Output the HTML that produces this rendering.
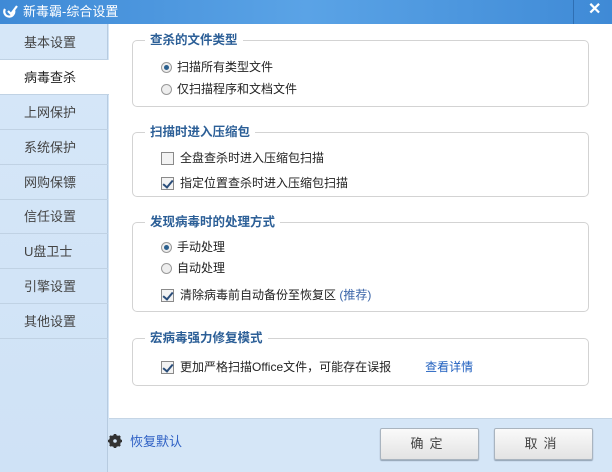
<!DOCTYPE html>
<html><head><meta charset="utf-8"><style>
*{margin:0;padding:0;box-sizing:border-box}
body{width:612px;height:472px;overflow:hidden;font-family:"Liberation Sans","Noto Sans CJK SC",sans-serif;font-size:12px;color:#222;background:#d5e6f7;position:relative}
.title{position:absolute;left:0;top:0;width:612px;height:24px;background:linear-gradient(90deg,#3f8ad6,#5aa3e6 50%,#3f8ad6);color:#fff;font-size:13px;line-height:24px}
.title .t{position:absolute;left:23px;top:0}
.side{position:absolute;left:0;top:24px;width:108px;height:448px;background:linear-gradient(#d6e7f8,#cfe2f6);border-right:1px solid #b7cbe0}
.it{position:absolute;left:0;width:108px;height:35px;line-height:35px;padding-left:24px;color:#444;font-size:13px;border-bottom:1px solid #c0d2e4}
.it.a{background:#fff;color:#222;border-bottom:1px solid #c0d2e4;width:109px}
.main{position:absolute;left:109px;top:24px;width:503px;height:395px;background:#fff;border-bottom:1px solid #c5d5e5}
.box{position:absolute;left:23px;width:457px;border:1px solid #d3d3d3;border-radius:5px}
.lg{position:absolute;left:12px;top:-9px;background:#fff;padding:0 5px;color:#2c5f97;font-size:12.5px;font-weight:bold;line-height:16px}
.row{position:absolute;left:28px;height:16px;line-height:16px;display:flex;align-items:center}
.rad{width:11px;height:11px;border-radius:50%;border:1px solid #999;background:#eee;margin-right:5px;position:relative}
.rad.on::after{content:"";position:absolute;left:2px;top:2px;width:5px;height:5px;border-radius:50%;background:#2a5f8e}
.cb{width:13px;height:13px;border:1px solid #8a8a8a;background:#f3f3f3;margin-right:6px;position:relative}
.cb.on::after{content:"";position:absolute;left:3px;top:0px;width:4px;height:8px;border:solid #2b4e7a;border-width:0 2px 2px 0;transform:rotate(40deg)}
.btn{position:absolute;top:428px;width:99px;height:32px;border:1px solid #a9b4bf;border-radius:2px;background:linear-gradient(#fafafa,#e3e3e3);text-align:center;line-height:30px;font-size:13px;color:#444;letter-spacing:6px;box-shadow:0 1px 1px #8fa0b2}
</style></head><body>
<div class="title"><svg style="position:absolute;left:3px;top:5px" width="16" height="14" viewBox="0 0 16 14"><path d="M2 4 A5 5 0 1 0 11 5" fill="none" stroke="#fff" stroke-width="2.2"/><path d="M5 6 L8 9 L14 1" fill="none" stroke="#fff" stroke-width="2.2"/></svg><span class="t">新毒霸-综合设置</span>
<div style="position:absolute;left:573px;top:0;width:1px;height:24px;background:#2f6fb3"></div>
<span style="position:absolute;left:588px;top:-2px;font-size:16px;font-weight:bold">✕</span></div>
<div class="side">
<div class="it" style="top:1px">基本设置</div>
<div class="it a" style="top:36px">病毒查杀</div>
<div class="it" style="top:71px">上网保护</div>
<div class="it" style="top:106px">系统保护</div>
<div class="it" style="top:141px">网购保镖</div>
<div class="it" style="top:175px">信任设置</div>
<div class="it" style="top:210px">U盘卫士</div>
<div class="it" style="top:245px">引擎设置</div>
<div class="it" style="top:280px">其他设置</div>
</div>
<div class="main">
<div class="box" style="top:16px;height:67px"><div class="lg">查杀的文件类型</div>
<div class="row" style="top:18px;left:28px"><span class="rad on"></span>扫描所有类型文件</div>
<div class="row" style="top:40px;left:28px"><span class="rad"></span>仅扫描程序和文档文件</div></div>
<div class="box" style="top:108px;height:65px"><div class="lg">扫描时进入压缩包</div>
<div class="row" style="top:17px"><span class="cb"></span>全盘查杀时进入压缩包扫描</div>
<div class="row" style="top:42px"><span class="cb on"></span>指定位置查杀时进入压缩包扫描</div></div>
<div class="box" style="top:198px;height:90px"><div class="lg">发现病毒时的处理方式</div>
<div class="row" style="top:16px"><span class="rad on"></span>手动处理</div>
<div class="row" style="top:37px"><span class="rad"></span>自动处理</div>
<div class="row" style="top:64px"><span class="cb on"></span>清除病毒前自动备份至恢复区&nbsp;<span style="color:#3a64a8">(推荐)</span></div></div>
<div class="box" style="top:314px;height:48px"><div class="lg">宏病毒强力修复模式</div>
<div class="row" style="top:20px"><span class="cb on"></span>更加严格扫描Office文件，可能存在误报<span style="color:#1f5fbf;margin-left:34px">查看详情</span></div></div>
</div>
<svg style="position:absolute;left:108px;top:434px" width="14" height="14" viewBox="0 0 14 14"><circle cx="7" cy="7" r="4.5" fill="none" stroke="#333" stroke-width="3"/><g stroke="#333" stroke-width="2.6"><path d="M7 0V14M0 7H14M2 2L12 12M12 2L2 12"/></g><circle cx="7" cy="7" r="1.8" fill="#d5e6f7"/></svg>
<span style="position:absolute;left:130px;top:434px;color:#2d5fc4;font-size:13px;line-height:16px">恢复默认</span>
<div class="btn" style="left:380px">确定</div>
<div class="btn" style="left:494px">取消</div>
</body></html>
